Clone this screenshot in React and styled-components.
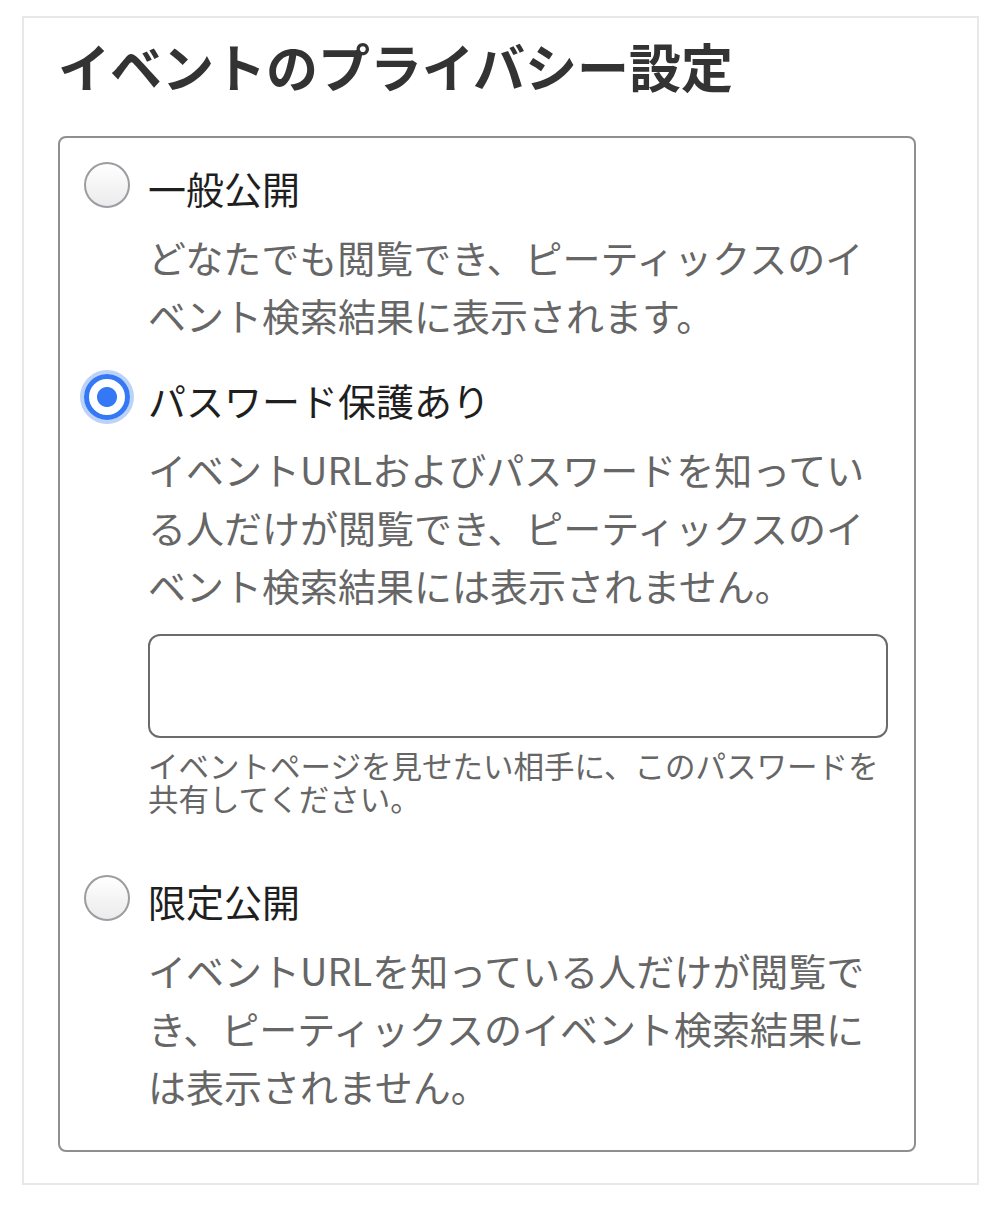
import React, { useState } from 'react'
import styled, { createGlobalStyle } from 'styled-components'

const GlobalStyle = createGlobalStyle`
  body {
    margin: 0;
    background: #fff;
    font-family: "Noto Sans CJK JP", "Noto Sans", sans-serif;
  }
`

const options = [
  {
    value: 'public',
    label: '一般公開',
    description: 'どなたでも閲覧でき、ピーティックスのイベント検索結果に表示されます。',
  },
  {
    value: 'password',
    label: 'パスワード保護あり',
    description: 'イベントURLおよびパスワードを知っている人だけが閲覧でき、ピーティックスのイベント検索結果には表示されません。',
    hasPassword: true,
  },
  {
    value: 'limited',
    label: '限定公開',
    description: 'イベントURLを知っている人だけが閲覧でき、ピーティックスのイベント検索結果には表示されません。',
  },
]

const App = () => {
  const [privacy, setPrivacy] = useState('password')
  const [password, setPassword] = useState('')

  return (
    <Page>
      <GlobalStyle />
      <Card>
        <Title>イベントのプライバシー設定</Title>
        <OptionGroup>
          {options.map((opt) => (
            <Option key={opt.value} $extra={opt.hasPassword}>
              <RadioRow>
                <Radio
                  type="radio"
                  name="privacy"
                  value={opt.value}
                  checked={privacy === opt.value}
                  onChange={() => setPrivacy(opt.value)}
                  $checked={privacy === opt.value}
                />
                <Label>{opt.label}</Label>
              </RadioRow>
              <Description>{opt.description}</Description>
              {opt.hasPassword && (
                <>
                  <PasswordInput
                    type="text"
                    value={password}
                    onChange={(e) => setPassword(e.target.value)}
                  />
                  <Helper>イベントページを見せたい相手に、このパスワードを共有してください。</Helper>
                </>
              )}
            </Option>
          ))}
        </OptionGroup>
      </Card>
    </Page>
  )
}

const Page = styled.div`
  padding: 16px 22px;
`

const Card = styled.div`
  box-sizing: border-box;
  width: 957px;
  border: 2px solid #e8e8e8;
  padding: 18px 61px 31px 34px;
`

const Title = styled.h1`
  margin: 0 0 40px;
  font-size: 52px;
  line-height: 60px;
  font-weight: 700;
  color: #333;
`

const OptionGroup = styled.div`
  box-sizing: border-box;
  display: flex;
  flex-direction: column;
  gap: 32px;
  border: 2px solid #8e8e93;
  border-radius: 8px;
  padding: 26px 26px 35px 24px;
`

const Option = styled.div`
  display: grid;
  grid-template-columns: 46px 1fr;
  column-gap: 18px;
  margin-bottom: ${(p) => (p.$extra ? '30px' : '0')};

  & > *:not(:first-child) {
    grid-column: 2;
  }
`

const RadioRow = styled.div`
  grid-column: 1 / -1;
  display: grid;
  grid-template-columns: 46px 1fr;
  column-gap: 18px;
  align-items: center;
`

const Radio = styled.input`
  appearance: none;
  box-sizing: border-box;
  width: 46px;
  height: 46px;
  margin: 0;
  position: relative;
  top: -3px;
  border-radius: 50%;
  border: ${(p) => (p.$checked ? '5px solid #3478f6' : '2px solid #9c9ca1')};
  background: ${(p) =>
    p.$checked
      ? 'radial-gradient(circle, #3478f6 0 9.5px, #fff 10.5px)'
      : 'linear-gradient(#ffffff, #ebebeb)'};
  box-shadow: ${(p) => (p.$checked ? '0 0 0 4px #bcd2f7' : 'none')};
  outline: none;
  cursor: pointer;
`

const Label = styled.span`
  font-size: 38px;
  line-height: 48px;
  color: #1f1f1f;
`

const Description = styled.p`
  margin: 16px 0 0;
  font-size: 38px;
  line-height: 58px;
  color: #666;
`

const PasswordInput = styled.input`
  box-sizing: border-box;
  margin-top: 20px;
  width: 100%;
  height: 104px;
  border: 2px solid #6b6b6b;
  border-radius: 12px;
  padding: 0 20px;
  font-size: 38px;
  font-family: inherit;
  outline: none;
`

const Helper = styled.p`
  margin: 11px 0 0;
  font-size: 30.5px;
  line-height: 33px;
  color: #666;
`

export default App
